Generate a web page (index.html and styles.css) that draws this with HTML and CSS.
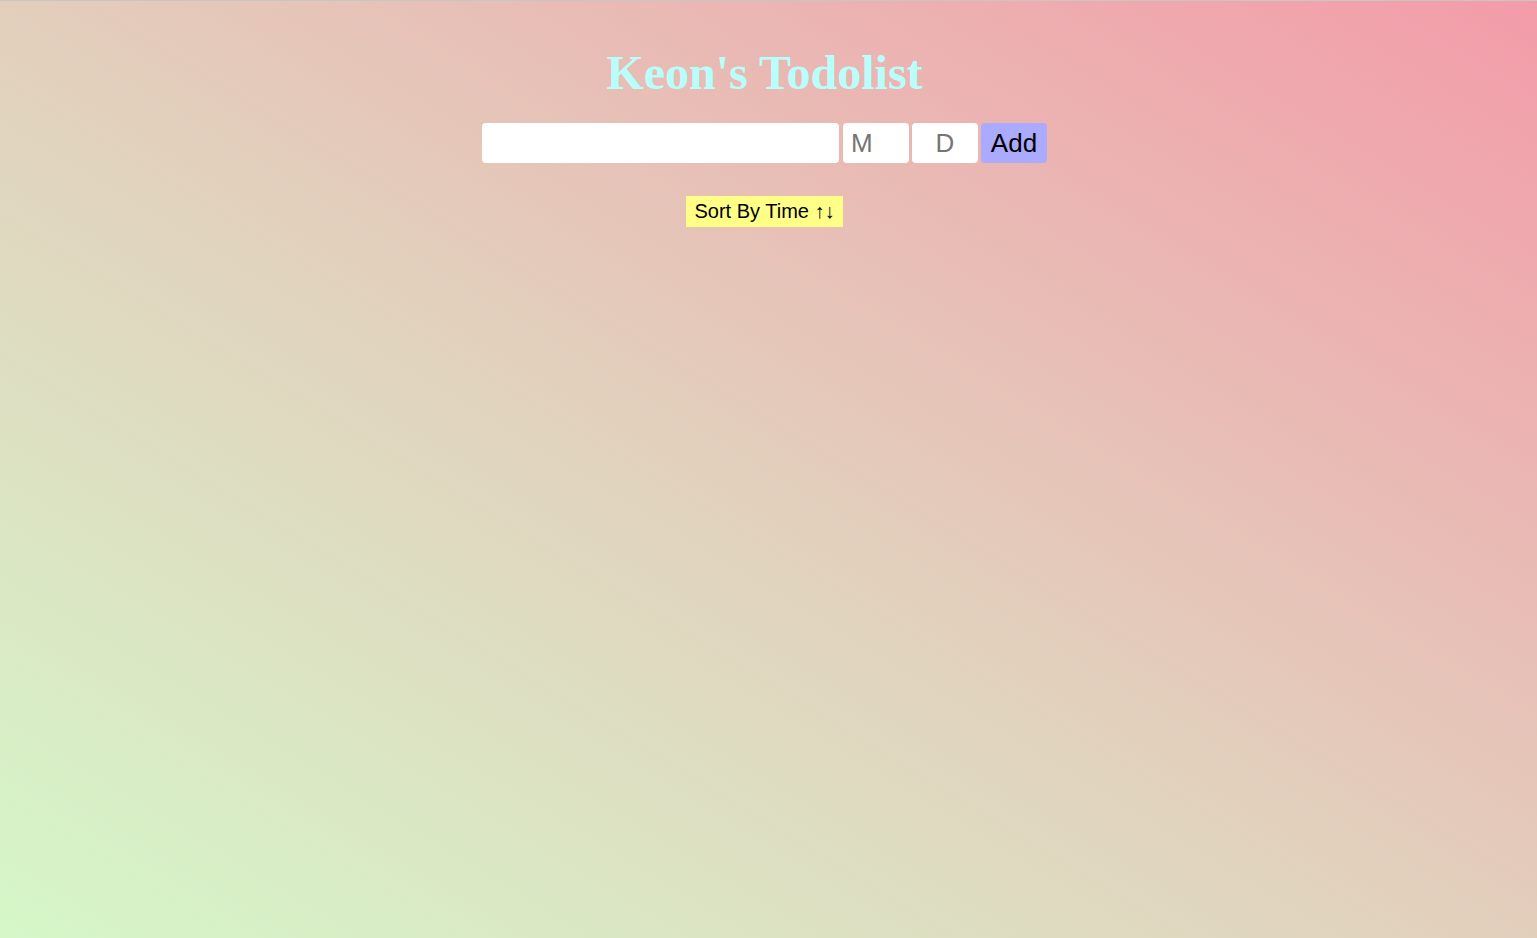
FILE: index.html
```html
<!DOCTYPE html>
<html>
<head>
<meta charset="utf-8">
<link rel="stylesheet" href="styles.css">
</head>
<body>
<div class="app">
  <h1 class="title">Keon's Todolist</h1>
  <form class="add-form">
    <input class="task-input" type="text">
    <input class="date-input month" type="text" placeholder="M">
    <input class="date-input day" type="text" placeholder="D">
    <button class="add-btn" type="button">Add</button>
  </form>
  <button class="sort-btn" type="button">Sort By Time ↑↓</button>
</div>
</body>
</html>
```
FILE: styles.css
```css
html, body {
  margin: 0;
  padding: 0;
  height: 100%;
}
html {
  border-top: 1px solid #c9c6c0;
  box-sizing: border-box;
}
body {
  background: linear-gradient(to top right, #d5f7c8 0%, #e1d3be 45%, #f39ca9 100%);
  font-family: "Liberation Sans", Arial, sans-serif;
}
.app {
  padding-right: 8px;
  display: flex;
  flex-direction: column;
  align-items: center;
}
.title {
  margin: 44px 0 0;
  font-family: "Liberation Serif", "Times New Roman", serif;
  font-weight: bold;
  font-size: 48px;
  line-height: 56px;
  color: #b8fffb;
}
.add-form {
  margin-top: 22px;
  display: flex;
  gap: 3px;
  height: 40px;
}
.task-input, .date-input, .add-btn {
  border: none;
  border-radius: 4px;
  height: 40px;
  box-sizing: border-box;
  font-family: "Liberation Sans", Arial, sans-serif;
  font-size: 26px;
  outline: none;
}
.task-input {
  width: 357px;
  margin-right: 1px;
  background: #fff;
  padding: 0 8px;
}
.date-input {
  width: 66px;
  background: #fff;
  padding: 0 8px;
  color: #333;
}
.date-input::placeholder {
  color: #757575;
}
.day {
  text-align: center;
}
.add-btn {
  width: 66px;
  background: #aaaaff;
  color: #000;
  padding: 0;
}
.sort-btn {
  margin-top: 33px;
  width: 157px;
  height: 31px;
  border: none;
  border-radius: 0;
  background: #ffff88;
  color: #000;
  font-family: "Liberation Sans", Arial, sans-serif;
  font-size: 20px;
  padding: 0;
}
```
